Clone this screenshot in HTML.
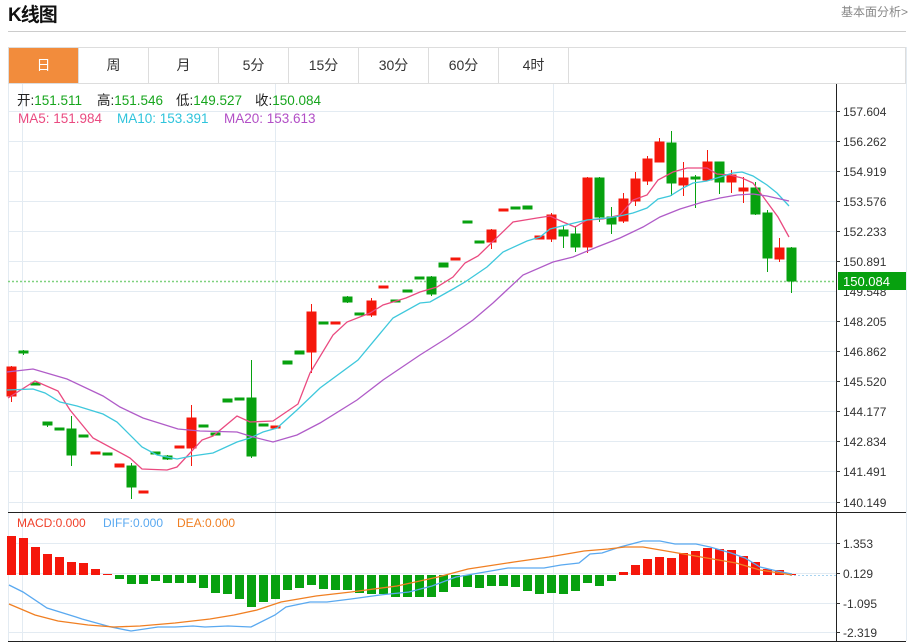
<!DOCTYPE html>
<html><head><meta charset="utf-8">
<style>
*{margin:0;padding:0;box-sizing:border-box}
body{width:912px;height:644px;background:#fff;font-family:"Liberation Sans","Noto Sans CJK SC",sans-serif;position:relative;overflow:hidden}
.title{position:absolute;left:8px;top:0px;font-size:19px;font-weight:bold;color:#111;letter-spacing:-1px}
.more{position:absolute;right:4px;top:3px;font-size:12px;color:#888}
.hr{position:absolute;left:8px;top:31px;width:898px;height:1px;background:#ccc}
.tabs{position:absolute;left:8px;top:47px;width:898px;height:37px;border:1px solid #ddd;display:flex}
.tab{width:70px;height:35px;border-right:1px solid #ddd;font-size:14px;color:#333;text-align:center;line-height:35px}
.tab.on{background:#f28c3c;color:#fff}
svg{position:absolute;left:0;top:0}
</style></head><body>
<div class="title">K线图</div>
<div class="more">基本面分析&gt;</div>
<div class="hr"></div>
<div class="tabs"><div class="tab on">日</div><div class="tab">周</div><div class="tab">月</div><div class="tab">5分</div><div class="tab">15分</div><div class="tab">30分</div><div class="tab">60分</div><div class="tab">4时</div></div>
<svg width="912" height="644" viewBox="0 0 912 644" font-family="Liberation Sans, Noto Sans CJK SC, sans-serif">
<g stroke="#e3ebf2" stroke-width="1">
<line x1="8" y1="111.5" x2="836" y2="111.5"/><line x1="8" y1="141.5" x2="836" y2="141.5"/><line x1="8" y1="171.5" x2="836" y2="171.5"/><line x1="8" y1="201.5" x2="836" y2="201.5"/><line x1="8" y1="231.5" x2="836" y2="231.5"/><line x1="8" y1="261.5" x2="836" y2="261.5"/><line x1="8" y1="291.5" x2="836" y2="291.5"/><line x1="8" y1="321.5" x2="836" y2="321.5"/><line x1="8" y1="351.5" x2="836" y2="351.5"/><line x1="8" y1="381.5" x2="836" y2="381.5"/><line x1="8" y1="411.5" x2="836" y2="411.5"/><line x1="8" y1="441.5" x2="836" y2="441.5"/><line x1="8" y1="471.5" x2="836" y2="471.5"/><line x1="8" y1="502.5" x2="836" y2="502.5"/>
<line x1="8" y1="543.5" x2="836" y2="543.5"/><line x1="8" y1="573.5" x2="836" y2="573.5"/><line x1="8" y1="603.5" x2="836" y2="603.5"/><line x1="8" y1="632.5" x2="836" y2="632.5"/>
<line x1="22.5" y1="84" x2="22.5" y2="641"/><line x1="275.5" y1="84" x2="275.5" y2="641"/><line x1="553.5" y1="84" x2="553.5" y2="641"/>
<line x1="8.5" y1="84" x2="8.5" y2="641"/><line x1="906.5" y1="47" x2="906.5" y2="641"/>
</g>
<line x1="836.5" y1="84" x2="836.5" y2="641" stroke="#222"/>
<line x1="8" y1="512.5" x2="906" y2="512.5" stroke="#222"/>
<line x1="8" y1="641.5" x2="906" y2="641.5" stroke="#222"/>
<line x1="8" y1="281.5" x2="836" y2="281.5" stroke="#7fd17f" stroke-dasharray="2,2" stroke-width="1.5"/>
<text y="105" font-size="13.5" fill="#222"><tspan x="17">开:</tspan><tspan fill="#17a51d">151.511</tspan><tspan x="97">高:</tspan><tspan fill="#17a51d">151.546</tspan><tspan x="176">低:</tspan><tspan fill="#17a51d">149.527</tspan><tspan x="255">收:</tspan><tspan fill="#17a51d">150.084</tspan></text>
<text x="18" y="123" font-size="13.5" fill="#ea4a80">MA5: 151.984</text>
<text x="117" y="123" font-size="13.5" fill="#2fc4dc">MA10: 153.391</text>
<text x="224" y="123" font-size="13.5" fill="#b24fc6">MA20: 153.613</text>
<g stroke-width="1">
<g stroke="#f5170b" fill="#f5170b">
<line x1="11.5" y1="366" x2="11.5" y2="402"/><rect x="7" y="367" width="9" height="29"/>
<rect x="91" y="452" width="9" height="2"/>
<rect x="115" y="464" width="9" height="3"/>
<rect x="139" y="491" width="9" height="2"/>
<rect x="175" y="446" width="9" height="2"/>
<line x1="191.5" y1="405" x2="191.5" y2="466"/><rect x="187" y="418" width="9" height="30"/>
<rect x="271" y="426" width="9" height="2"/>
<line x1="311.5" y1="304" x2="311.5" y2="373"/><rect x="307" y="312" width="9" height="40"/>
<rect x="331" y="322" width="9" height="2"/>
<line x1="371.5" y1="298" x2="371.5" y2="317"/><rect x="367" y="301" width="9" height="14"/>
<rect x="379" y="286" width="9" height="2"/>
<rect x="451" y="258" width="9" height="2"/>
<line x1="491.5" y1="229" x2="491.5" y2="249"/><rect x="487" y="230" width="9" height="12"/>
<rect x="499" y="209" width="9" height="2"/>
<rect x="535" y="236" width="9" height="3"/>
<line x1="551.5" y1="213" x2="551.5" y2="242"/><rect x="547" y="215" width="9" height="24"/>
<line x1="587.5" y1="177" x2="587.5" y2="253"/><rect x="583" y="178" width="9" height="69"/>
<line x1="623.5" y1="193" x2="623.5" y2="223"/><rect x="619" y="199" width="9" height="22"/>
<line x1="635.5" y1="172" x2="635.5" y2="206"/><rect x="631" y="179" width="9" height="22"/>
<line x1="647.5" y1="156" x2="647.5" y2="185"/><rect x="643" y="159" width="9" height="22"/>
<line x1="659.5" y1="138" x2="659.5" y2="162"/><rect x="655" y="142" width="9" height="20"/>
<line x1="683.5" y1="162" x2="683.5" y2="196"/><rect x="679" y="178" width="9" height="7"/>
<line x1="707.5" y1="150" x2="707.5" y2="180"/><rect x="703" y="162" width="9" height="18"/>
<line x1="731.5" y1="170" x2="731.5" y2="193"/><rect x="727" y="175" width="9" height="7"/>
<line x1="743.5" y1="177" x2="743.5" y2="203"/><rect x="739" y="188" width="9" height="3"/>
<line x1="779.5" y1="238" x2="779.5" y2="262"/><rect x="775" y="248" width="9" height="11"/>
</g>
<g stroke="#07a10f" fill="#07a10f">
<line x1="23.5" y1="350" x2="23.5" y2="355"/><rect x="19" y="351" width="9" height="2"/>
<rect x="31" y="383" width="9" height="2"/>
<line x1="47.5" y1="422" x2="47.5" y2="427"/><rect x="43" y="422" width="9" height="3"/>
<rect x="55" y="428" width="9" height="2"/>
<line x1="71.5" y1="416" x2="71.5" y2="466"/><rect x="67" y="429" width="9" height="26"/>
<rect x="79" y="435" width="9" height="2"/>
<rect x="103" y="453" width="9" height="2"/>
<line x1="131.5" y1="463" x2="131.5" y2="499"/><rect x="127" y="466" width="9" height="21"/>
<rect x="151" y="452" width="9" height="2"/>
<line x1="167.5" y1="455" x2="167.5" y2="460"/><rect x="163" y="456" width="9" height="3"/>
<rect x="199" y="425" width="9" height="2"/>
<rect x="211" y="433" width="9" height="2"/>
<rect x="223" y="399" width="9" height="3"/>
<rect x="235" y="398" width="9" height="2"/>
<line x1="251.5" y1="360" x2="251.5" y2="458"/><rect x="247" y="398" width="9" height="58"/>
<rect x="259" y="424" width="9" height="2"/>
<rect x="283" y="361" width="9" height="3"/>
<rect x="295" y="351" width="9" height="3"/>
<rect x="319" y="322" width="9" height="2"/>
<line x1="347.5" y1="296" x2="347.5" y2="303"/><rect x="343" y="297" width="9" height="5"/>
<rect x="355" y="313" width="9" height="2"/>
<rect x="391" y="300" width="9" height="2"/>
<rect x="403" y="290" width="9" height="2"/>
<rect x="415" y="277" width="9" height="2"/>
<line x1="431.5" y1="276" x2="431.5" y2="296"/><rect x="427" y="277" width="9" height="17"/>
<rect x="439" y="263" width="9" height="4"/>
<rect x="463" y="221" width="9" height="2"/>
<rect x="475" y="241" width="9" height="2"/>
<rect x="511" y="207" width="9" height="2"/>
<rect x="523" y="206" width="9" height="3"/>
<line x1="563.5" y1="225" x2="563.5" y2="248"/><rect x="559" y="230" width="9" height="6"/>
<line x1="575.5" y1="226" x2="575.5" y2="252"/><rect x="571" y="234" width="9" height="13"/>
<line x1="599.5" y1="177" x2="599.5" y2="222"/><rect x="595" y="178" width="9" height="39"/>
<line x1="611.5" y1="207" x2="611.5" y2="234"/><rect x="607" y="217" width="9" height="7"/>
<line x1="671.5" y1="131" x2="671.5" y2="196"/><rect x="667" y="143" width="9" height="40"/>
<line x1="695.5" y1="175" x2="695.5" y2="208"/><rect x="691" y="177" width="9" height="2"/>
<line x1="719.5" y1="162" x2="719.5" y2="194"/><rect x="715" y="162" width="9" height="20"/>
<line x1="755.5" y1="182" x2="755.5" y2="215"/><rect x="751" y="188" width="9" height="26"/>
<line x1="767.5" y1="210" x2="767.5" y2="272"/><rect x="763" y="213" width="9" height="45"/>
<line x1="791.5" y1="247" x2="791.5" y2="293"/><rect x="787" y="248" width="9" height="33"/>
</g>
</g>
<g fill="none" stroke-width="1.3">
<polyline stroke="#ea4a80" points="8,398 35,381 58,391 70,410 93,438 130,458 142,469 167,470 177,467 202,440 213,436 237,416 250,422 273,421 298,404 310,373 333,335 347,322 370,313 383,305 406,298 420,292 437,287 453,277 465,263 478,256 513,222 537,218 550,216 563,222 575,227 587,220 603,219 620,215 633,200 647,195 658,180 673,172 687,168 707,168 717,174 730,175 742,178 753,183 767,202 778,217 789,237"/>
<polyline stroke="#3fc8dc" points="7,390 33,389 45,393 60,402 77,406 103,414 117,422 142,447 157,455 177,459 192,456 213,453 237,442 250,438 263,432 277,428 297,410 320,388 358,360 393,318 420,303 430,302 453,289 465,282 487,267 503,252 527,241 540,237 550,229 570,224 587,220 607,218 620,216 633,213 647,208 658,199 670,196 683,188 693,183 707,181 720,177 733,173 742,172 753,176 767,185 777,193 789,206"/>
<polyline stroke="#b05cc8" points="7,372 33,369 67,379 103,396 120,407 143,418 178,429 200,431 237,432 253,437 273,442 297,435 320,423 357,400 383,380 420,355 447,338 473,320 493,303 523,275 553,262 573,257 597,247 620,238 643,227 660,217 680,209 703,202 720,198 737,195 753,194 767,196 789,201"/>
</g>
<g font-size="12" fill="#333">
<g stroke="#333"><line x1="836" y1="111.5" x2="840" y2="111.5"/><line x1="836" y1="141.5" x2="840" y2="141.5"/><line x1="836" y1="171.5" x2="840" y2="171.5"/><line x1="836" y1="201.5" x2="840" y2="201.5"/><line x1="836" y1="231.5" x2="840" y2="231.5"/><line x1="836" y1="261.5" x2="840" y2="261.5"/><line x1="836" y1="321.5" x2="840" y2="321.5"/><line x1="836" y1="351.5" x2="840" y2="351.5"/><line x1="836" y1="381.5" x2="840" y2="381.5"/><line x1="836" y1="411.5" x2="840" y2="411.5"/><line x1="836" y1="441.5" x2="840" y2="441.5"/><line x1="836" y1="471.5" x2="840" y2="471.5"/><line x1="836" y1="502.5" x2="840" y2="502.5"/><line x1="836" y1="543.5" x2="840" y2="543.5"/><line x1="836" y1="573.5" x2="840" y2="573.5"/><line x1="836" y1="603.5" x2="840" y2="603.5"/><line x1="836" y1="632.5" x2="840" y2="632.5"/></g>
<text x="843" y="116">157.604</text><text x="843" y="146">156.262</text><text x="843" y="176">154.919</text><text x="843" y="206">153.576</text><text x="843" y="236">152.233</text><text x="843" y="266">150.891</text><text x="843" y="296">149.548</text><text x="843" y="326">148.205</text><text x="843" y="356">146.862</text><text x="843" y="386">145.520</text><text x="843" y="416">144.177</text><text x="843" y="446">142.834</text><text x="843" y="476">141.491</text><text x="843" y="507">140.149</text>
<text x="843" y="548">1.353</text><text x="843" y="578">0.129</text><text x="843" y="608">-1.095</text><text x="843" y="637">-2.319</text>
</g>
<rect x="838" y="272" width="68" height="18" fill="#07a10f"/>
<text x="843" y="286" font-size="13" fill="#fff">150.084</text>
<text x="17" y="527" font-size="12" fill="#f0402a">MACD:0.000</text>
<text x="103" y="527" font-size="12" fill="#5aa9f0">DIFF:0.000</text>
<text x="177" y="527" font-size="12" fill="#f07f22">DEA:0.000</text>
<line x1="790" y1="575.5" x2="836" y2="575.5" stroke="#a8d4f0" stroke-dasharray="2,2"/>
<g fill="#f5170b">
<rect x="7" y="536" width="9" height="39"/><rect x="19" y="538" width="9" height="37"/><rect x="31" y="547" width="9" height="28"/><rect x="43" y="554" width="9" height="21"/><rect x="55" y="557" width="9" height="18"/><rect x="67" y="562" width="9" height="13"/><rect x="79" y="563" width="9" height="12"/><rect x="91" y="569" width="9" height="6"/><rect x="103" y="574" width="9" height="1"/>
<rect x="619" y="572" width="9" height="3"/><rect x="631" y="565" width="9" height="10"/><rect x="643" y="559" width="9" height="16"/><rect x="655" y="557" width="9" height="18"/><rect x="667" y="558" width="9" height="17"/><rect x="679" y="553" width="9" height="22"/><rect x="691" y="551" width="9" height="24"/><rect x="703" y="548" width="9" height="27"/><rect x="715" y="549" width="9" height="26"/><rect x="727" y="550" width="9" height="25"/><rect x="739" y="556" width="9" height="19"/><rect x="751" y="562" width="9" height="13"/><rect x="763" y="569" width="9" height="6"/><rect x="775" y="570" width="9" height="5"/><rect x="787" y="574" width="9" height="1"/>
</g>
<g fill="#07a10f">
<rect x="115" y="575" width="9" height="4"/><rect x="127" y="575" width="9" height="9"/><rect x="139" y="575" width="9" height="9"/><rect x="151" y="575" width="9" height="6"/><rect x="163" y="575" width="9" height="8"/><rect x="175" y="575" width="9" height="8"/><rect x="187" y="575" width="9" height="8"/><rect x="199" y="575" width="9" height="13"/><rect x="211" y="575" width="9" height="18"/><rect x="223" y="575" width="9" height="19"/><rect x="235" y="575" width="9" height="24"/><rect x="247" y="575" width="9" height="32"/><rect x="259" y="575" width="9" height="27"/><rect x="271" y="575" width="9" height="24"/><rect x="283" y="575" width="9" height="15"/><rect x="295" y="575" width="9" height="13"/><rect x="307" y="575" width="9" height="10"/><rect x="319" y="575" width="9" height="14"/><rect x="331" y="575" width="9" height="15"/><rect x="343" y="575" width="9" height="15"/><rect x="355" y="575" width="9" height="18"/><rect x="367" y="575" width="9" height="19"/><rect x="379" y="575" width="9" height="19"/><rect x="391" y="575" width="9" height="22"/><rect x="403" y="575" width="9" height="22"/><rect x="415" y="575" width="9" height="22"/><rect x="427" y="575" width="9" height="22"/><rect x="439" y="575" width="9" height="17"/><rect x="451" y="575" width="9" height="12"/><rect x="463" y="575" width="9" height="12"/><rect x="475" y="575" width="9" height="13"/><rect x="487" y="575" width="9" height="11"/><rect x="499" y="575" width="9" height="11"/><rect x="511" y="575" width="9" height="12"/><rect x="523" y="575" width="9" height="16"/><rect x="535" y="575" width="9" height="19"/><rect x="547" y="575" width="9" height="18"/><rect x="559" y="575" width="9" height="19"/><rect x="571" y="575" width="9" height="16"/><rect x="583" y="575" width="9" height="8"/><rect x="595" y="575" width="9" height="11"/><rect x="607" y="575" width="9" height="6"/>
</g>
<g fill="none" stroke-width="1.3">
<polyline stroke="#5aa9f0" points="9,585 23,592 47,608 76,617 82,619 111,627 131,631 158,627 175,627 193,626 205,627 228,626 251,627 275,615 286,607 310,602 327,602 351,599 380,595 409,592 432,586 456,577 485,572 508,568 544,568 561,565 579,563 590,554 602,553 620,547 643,541 660,541 675,544 696,544 710,547 731,553 745,558 760,567 777,571 792,574"/>
<polyline stroke="#f07f22" points="9,604 35,615 58,621 88,625 114,627 140,626 175,623 210,619 234,615 257,610 281,602 316,596 351,592 397,586 438,577 468,569 514,562 549,557 584,551 608,549 625,547 643,547 672,552 701,557 736,563 760,570 792,575"/>
</g>
</svg>
</body></html>
